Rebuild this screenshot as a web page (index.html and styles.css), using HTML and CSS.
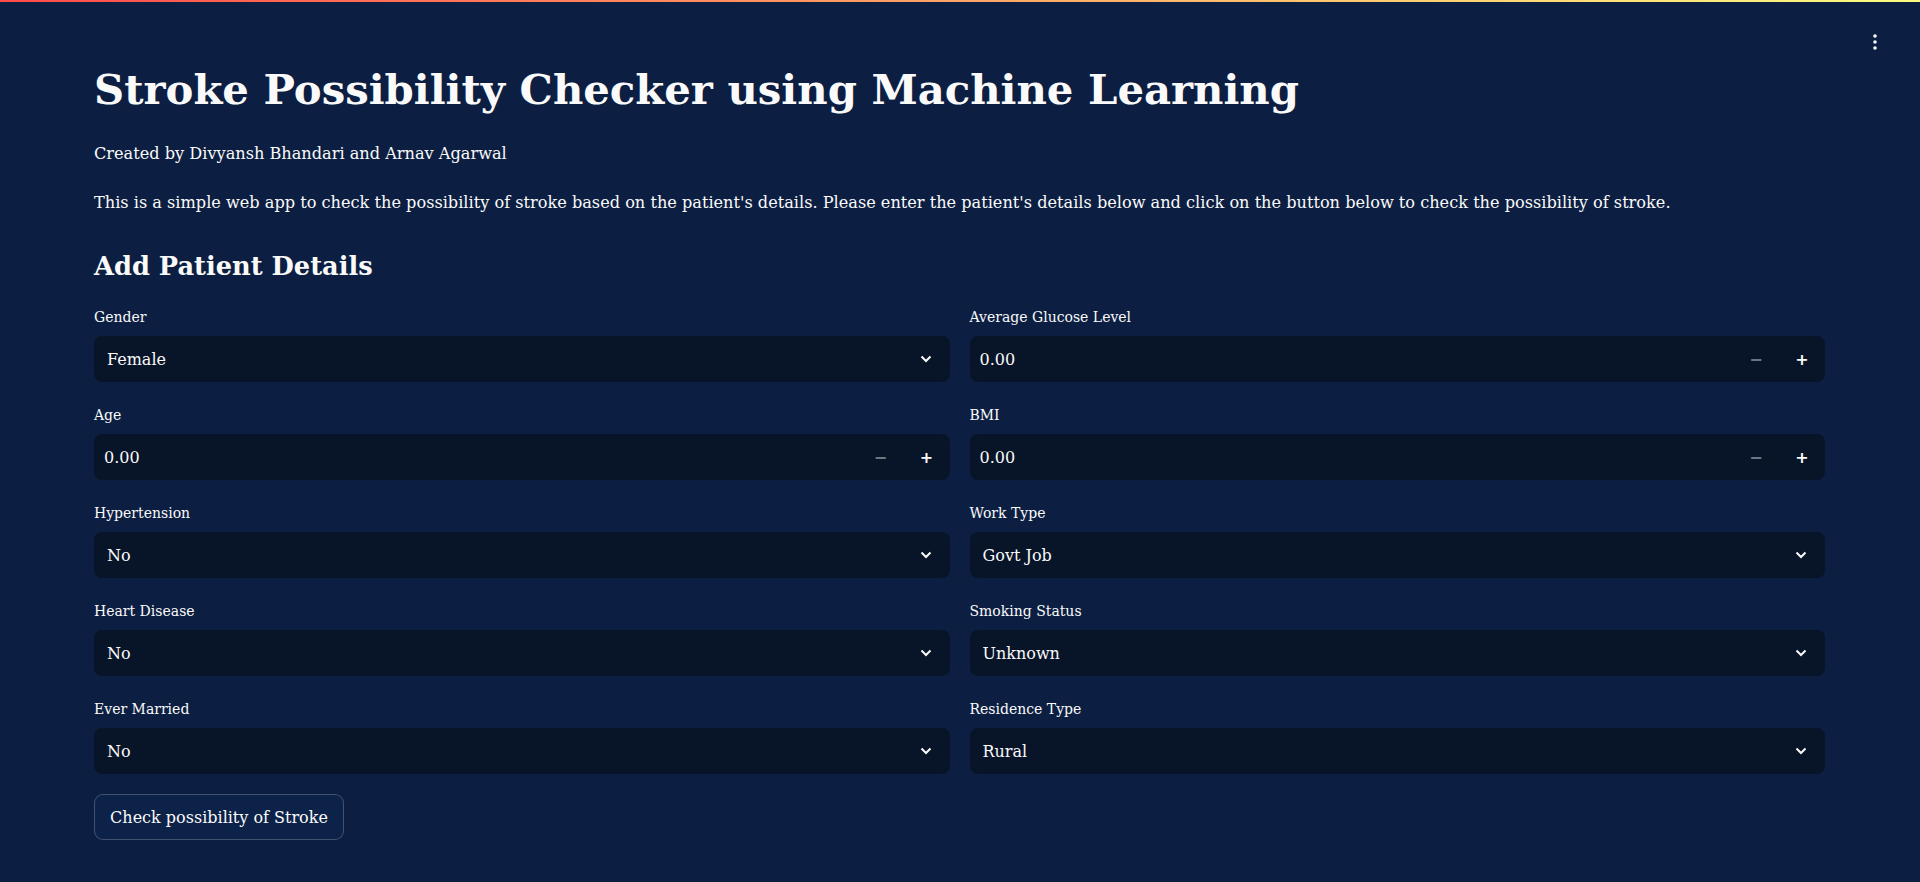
FILE: index.html
```html
<!DOCTYPE html>
<html lang="en">
<head>
<meta charset="utf-8">
<title>Stroke Possibility Checker</title>
<link rel="stylesheet" href="styles.css">
</head>
<body>
<div class="topbar"></div>
<button class="menu" aria-label="Main menu">
  <svg width="6" height="18" viewBox="0 0 6 18"><circle cx="3" cy="3" r="1.8" fill="#fafafa"/><circle cx="3" cy="9" r="1.8" fill="#fafafa"/><circle cx="3" cy="15" r="1.8" fill="#fafafa"/></svg>
</button>
<main class="main">
  <h1 class="title">Stroke Possibility Checker using Machine Learning</h1>
  <p class="credit">Created by Divyansh Bhandari and Arnav Agarwal</p>
  <p class="intro">This is a simple web app to check the possibility of stroke based on the patient's details. Please enter the patient's details below and click on the button below to check the possibility of stroke.</p>
  <h3 class="section">Add Patient Details</h3>
  <div class="columns">
    <div class="col">
      <div class="field">
        <label class="label">Gender</label>
        <div class="select"><span>Female</span><svg class="chev" width="12" height="8" viewBox="0 0 12 8"><path d="M1.5 1.5 L6 6 L10.5 1.5" fill="none" stroke="#fafafa" stroke-width="2"/></svg></div>
      </div>
      <div class="field">
        <label class="label">Age</label>
        <div class="number"><span class="val">0.00</span><span class="step minus">&minus;</span><span class="step plus">+</span></div>
      </div>
      <div class="field">
        <label class="label">Hypertension</label>
        <div class="select"><span>No</span><svg class="chev" width="12" height="8" viewBox="0 0 12 8"><path d="M1.5 1.5 L6 6 L10.5 1.5" fill="none" stroke="#fafafa" stroke-width="2"/></svg></div>
      </div>
      <div class="field">
        <label class="label">Heart Disease</label>
        <div class="select"><span>No</span><svg class="chev" width="12" height="8" viewBox="0 0 12 8"><path d="M1.5 1.5 L6 6 L10.5 1.5" fill="none" stroke="#fafafa" stroke-width="2"/></svg></div>
      </div>
      <div class="field">
        <label class="label">Ever Married</label>
        <div class="select"><span>No</span><svg class="chev" width="12" height="8" viewBox="0 0 12 8"><path d="M1.5 1.5 L6 6 L10.5 1.5" fill="none" stroke="#fafafa" stroke-width="2"/></svg></div>
      </div>
    </div>
    <div class="col">
      <div class="field">
        <label class="label">Average Glucose Level</label>
        <div class="number"><span class="val">0.00</span><span class="step minus">&minus;</span><span class="step plus">+</span></div>
      </div>
      <div class="field">
        <label class="label">BMI</label>
        <div class="number"><span class="val">0.00</span><span class="step minus">&minus;</span><span class="step plus">+</span></div>
      </div>
      <div class="field">
        <label class="label">Work Type</label>
        <div class="select"><span>Govt Job</span><svg class="chev" width="12" height="8" viewBox="0 0 12 8"><path d="M1.5 1.5 L6 6 L10.5 1.5" fill="none" stroke="#fafafa" stroke-width="2"/></svg></div>
      </div>
      <div class="field">
        <label class="label">Smoking Status</label>
        <div class="select"><span>Unknown</span><svg class="chev" width="12" height="8" viewBox="0 0 12 8"><path d="M1.5 1.5 L6 6 L10.5 1.5" fill="none" stroke="#fafafa" stroke-width="2"/></svg></div>
      </div>
      <div class="field">
        <label class="label">Residence Type</label>
        <div class="select"><span>Rural</span><svg class="chev" width="12" height="8" viewBox="0 0 12 8"><path d="M1.5 1.5 L6 6 L10.5 1.5" fill="none" stroke="#fafafa" stroke-width="2"/></svg></div>
      </div>
    </div>
  </div>
  <button class="check">Check possibility of Stroke</button>
</main>
</body>
</html>
```

FILE: styles.css
```css
html, body {
  margin: 0;
  padding: 0;
}
body {
  background: #0c1f42;
  color: #fafafa;
  font-family: "DejaVu Serif", "Liberation Serif", serif;
  height: 882px;
  overflow: hidden;
}
.topbar {
  height: 2px;
  background: linear-gradient(90deg, #ff4b4b, #fffd80);
}
.menu {
  position: absolute;
  top: 32px;
  right: 40px;
  width: 10px;
  height: 20px;
  padding: 0;
  border: none;
  background: transparent;
  display: flex;
  align-items: center;
  justify-content: center;
}
.main {
  padding: 58px 95px 0 94px;
}
.title {
  margin: 0;
  font-size: 41.8px;
  line-height: 60px;
  font-weight: 700;
}
.credit {
  margin: 19.3px 0 0;
  font-size: 16.15px;
  line-height: 29.4px;
}
.intro {
  margin: 19.6px 0 0;
  font-size: 16.15px;
  line-height: 29.4px;
}
.section {
  margin: 30.5px 0 0;
  font-size: 25.7px;
  line-height: 36px;
  font-weight: 700;
}
.columns {
  margin-top: 19px;
  display: grid;
  grid-template-columns: 1fr 1fr;
  column-gap: 20px;
}
.col {
  display: flex;
  flex-direction: column;
  gap: 19px;
}
.field {
  display: flex;
  flex-direction: column;
}
.label {
  font-size: 14px;
  line-height: 28px;
  height: 28px;
  margin-bottom: 5px;
}
.select, .number {
  height: 46px;
  background: #081428;
  border-radius: 8px;
  display: flex;
  align-items: center;
  font-size: 16px;
  box-sizing: border-box;
}
.select {
  padding: 0 18px 0 13px;
  justify-content: space-between;
}
.number {
  padding-left: 10px;
}
.number .val {
  flex: 1;
}
.step {
  width: 46px;
  height: 46px;
  display: flex;
  align-items: center;
  justify-content: center;
  font-family: "DejaVu Sans", sans-serif;
  font-weight: 700;
  font-size: 16px;
}
.minus {
  color: #6d7585;
}
.plus {
  color: #fafafa;
}
.check {
  margin-top: 20px;
  height: 46px;
  width: 250px;
  border: 1px solid rgba(250, 250, 250, 0.22);
  border-radius: 9px;
  background: #0d2249;
  color: #fafafa;
  font-family: "DejaVu Serif", "Liberation Serif", serif;
  font-size: 16px;
  padding: 0;
}
```
